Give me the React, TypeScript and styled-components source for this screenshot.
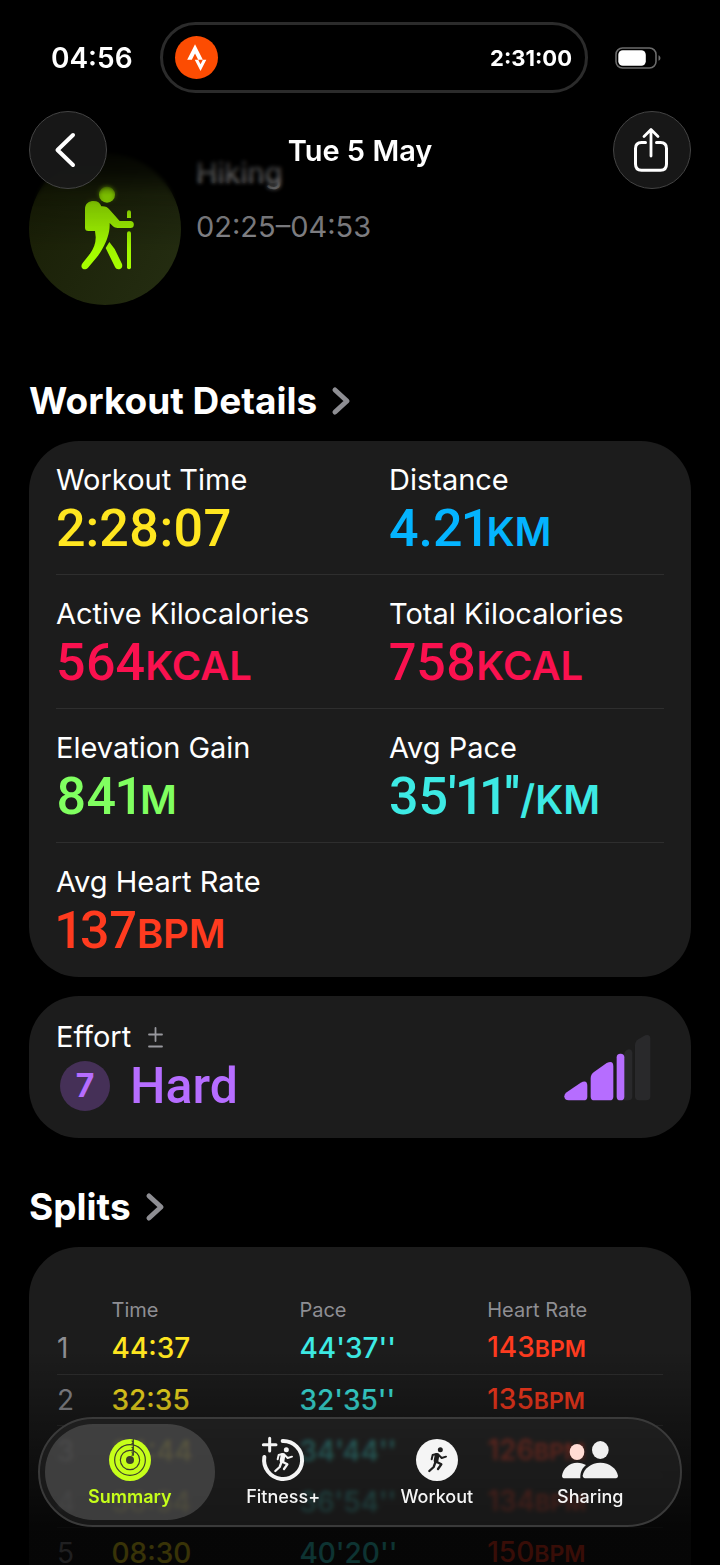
import React from 'react';
import styled, { createGlobalStyle } from 'styled-components';

const GlobalStyle = createGlobalStyle`
  *, *::before, *::after { box-sizing: border-box; }
  body {
    margin: 0;
    background: #000;
    color: #fff;
    font-family: Inter, "Liberation Sans", sans-serif;
  }
  button { font: inherit; color: inherit; background: none; border: 0; padding: 0; }
  a { color: inherit; text-decoration: none; }
  h1, h2, p, dl, dd { margin: 0; }
  svg { overflow: visible; }
`;

const Screen = styled.div`
  position: relative;
  height: 100vh;
  overflow: hidden;
  background: #000;
`;

const Scroller = styled.main`
  height: 100%;
  overflow-y: auto;
  scrollbar-width: none;
  padding: 153px 29px 140px;
`;

/* ---------- top overlay ---------- */

const TopOverlay = styled.header`
  position: absolute;
  inset: 0 0 auto;
  z-index: 2;
`;

const TopFade = styled.div`
  position: absolute;
  inset: 0 0 auto;
  height: 250px;
  background: linear-gradient(to bottom, #000 55%, rgba(0, 0, 0, 0.68) 69%, rgba(0, 0, 0, 0.25) 78%, transparent);
`;

const TopBlur = styled.div`
  position: absolute;
  inset: 0 0 auto;
  height: 206px;
  backdrop-filter: blur(2px);
  mask-image: linear-gradient(to bottom, #000 88%, transparent);
`;

const StatusBar = styled.div`
  position: relative;
  display: grid;
  grid-template-columns: 160px 1fr 132px;
  align-items: center;
  padding-top: 22px;
`;

const Clock = styled.time`
  padding-left: 51px;
  font-size: 28px;
  line-height: 36px;
  font-weight: 600;
`;

const Island = styled.div`
  display: flex;
  align-items: center;
  justify-content: space-between;
  height: 71px;
  padding: 0 13px 0 12px;
  border: 3px solid #2b2b2b;
  border-radius: 36px;
  font-size: 22px;
  line-height: 32px;
  font-weight: 700;
`;

const BatteryWrap = styled.div`
  display: flex;
  padding-left: 27px;
`;

const NavBar = styled.nav`
  position: relative;
  display: grid;
  grid-template-columns: 78px 1fr 78px;
  align-items: center;
  padding: 18px 29px 0;
`;

const RoundButton = styled.button`
  display: flex;
  align-items: center;
  justify-content: center;
  width: 78px;
  height: 78px;
  border-radius: 50%;
  border: 1px solid #444;
  background: rgba(26, 26, 26, 0.9);
`;

const NavTitle = styled.h1`
  padding-top: 2px;
  text-align: center;
  font-size: 29px;
  line-height: 40px;
  font-weight: 600;
`;

/* ---------- workout summary ---------- */

const Intro = styled.section`
  display: flex;
  gap: 15px;
  height: 152px;
`;

const Badge = styled.div`
  display: flex;
  justify-content: center;
  padding-top: 32px;
  width: 152px;
  height: 152px;
  border-radius: 50%;
  background: linear-gradient(120deg, #181d05, #252e12);
`;

const IntroText = styled.div`
  display: flex;
  flex-direction: column;
  gap: 14px;
  font-size: 29px;
  line-height: 40px;
`;

const IntroName = styled.p`
  font-weight: 400;
`;

const IntroTime = styled.p`
  color: #88888c;
`;

const SectionLink = styled.a`
  display: flex;
  align-items: center;
  gap: 15px;
`;

const SectionTitle = styled.h2<{ $top: number }>`
  margin-top: ${(p) => p.$top}px;
  margin-bottom: 16px;
  font-size: 37px;
  line-height: 48px;
  font-weight: 700;
`;

const Card = styled.section`
  border-radius: 50px;
  background: #1c1c1c;
`;

const MetricsCard = styled(Card)`
  padding: 0 27px;
`;

const MetricRow = styled.dl`
  display: grid;
  grid-template-columns: 1fr 1fr;
  column-gap: 58px;
  padding: 21px 0 14px;
  border-bottom: 1px solid #2e2e2e;
  &:last-child { border-bottom-color: transparent; }
`;

const Label = styled.dt`
  font-size: 29px;
  line-height: 36px;
  white-space: nowrap;
`;

const Value = styled.dd<{ $color: string }>`
  color: ${(p) => p.$color};
  font-family: Roboto, Inter, sans-serif;
  font-size: 52px;
  line-height: 62px;
  font-weight: 500;
  font-variant-numeric: proportional-nums;
  white-space: nowrap;
`;

const Unit = styled.span`
  font-family: Inter, sans-serif;
  font-size: 40px;
  line-height: 1;
  font-weight: 600;
`;

const EffortCard = styled(Card)`
  display: flex;
  align-items: flex-start;
  justify-content: space-between;
  margin-top: 19px;
  padding: 23px 41px 21px 27px;
`;

const EffortLabel = styled.div`
  display: flex;
  align-items: center;
  gap: 17px;
  font-size: 29px;
  line-height: 36px;
`;

const EffortValue = styled.div`
  display: flex;
  align-items: center;
  gap: 20px;
  height: 62px;
  padding-left: 4px;
  color: #b66dff;
  font-family: Roboto, Inter, sans-serif;
  font-size: 50px;
  line-height: 60px;
  font-weight: 500;
`;

const EffortScore = styled.span`
  display: flex;
  align-items: center;
  justify-content: center;
  width: 50px;
  height: 50px;
  border-radius: 50%;
  background: #453057;
  font-family: Inter, sans-serif;
  font-size: 32px;
  line-height: 40px;
  font-weight: 700;
`;

const EffortChart = styled.svg`
  margin-top: 15px;
`;

/* ---------- splits ---------- */

const SplitsCard = styled(Card)`
  padding: 42px 28px 40px;
`;

const SplitsTable = styled.table`
  width: 100%;
  table-layout: fixed;
  border-collapse: collapse;
  text-align: left;
`;

const HeadCell = styled.th<{ $width?: string }>`
  width: ${(p) => p.$width || 'auto'};
  padding: 8px 0 0;
  height: 34px;
  color: #8e8e93;
  font-size: 20px;
  line-height: 26px;
  font-weight: 400;
`;

const SplitRow = styled.tr`
  height: 51px;
  & + & { border-top: 1px solid #2e2e2e; }
`;

const SplitCell = styled.td<{ $color: string }>`
  padding: 0;
  color: ${(p) => p.$color};
  font-size: 28px;
  line-height: 40px;
  font-weight: 500;
  white-space: nowrap;
`;

const SplitIndex = styled.th`
  padding: 0;
  color: #8e8e93;
  font-size: 28px;
  line-height: 40px;
  font-weight: 400;
`;

const SplitUnit = styled.span`
  font-size: 23px;
  font-weight: 600;
`;

/* ---------- tab bar ---------- */

const BottomFade = styled.div`
  position: absolute;
  inset: auto 0 0;
  height: 215px;
  background: linear-gradient(to bottom, transparent, rgba(0, 0, 0, 0.2) 22%, rgba(0, 0, 0, 0.46) 50%, rgba(0, 0, 0, 0.78) 85%);
  pointer-events: none;
`;

const TabBar = styled.nav`
  position: absolute;
  inset: auto 38px 38px;
  display: grid;
  grid-template-columns: repeat(4, 1fr);
  height: 110px;
  padding: 0 13px;
  border: 2px solid #3a3a3a;
  border-radius: 55px;
  background: rgba(40, 40, 40, 0.5);
  backdrop-filter: blur(2px);
`;

const Tab = styled.a<{ $active?: boolean }>`
  position: relative;
  display: flex;
  flex-direction: column;
  align-items: center;
  gap: 4px;
  padding-top: 20px;
  color: ${(p) => (p.$active ? '#c6ff1a' : '#f5f5f5')};
  font-size: 18px;
  line-height: 24px;
  font-weight: ${(p) => (p.$active ? 600 : 500)};

  &::before {
    content: '';
    position: absolute;
    inset: 5px -8px;
    border-radius: 48px;
    background: ${(p) => (p.$active ? 'rgba(86, 86, 86, 0.62)' : 'transparent')};
  }
  & > * { position: relative; }
`;

/* ---------- drawings ---------- */

const Chevron = () => (
  <svg width="18" height="28" viewBox="0 0 18 28" fill="none" stroke="#8e8e93" strokeWidth="5" strokeLinecap="round" strokeLinejoin="round">
    <path d="M3 3l12 11L3 25" />
  </svg>
);

const Battery = () => (
  <svg width="47" height="22" viewBox="0 0 47 22" fill="none">
    <rect x="1" y="1" width="40" height="20" rx="6.5" stroke="#6b6b6b" strokeWidth="1.6" />
    <rect x="3.3" y="3.3" width="27.5" height="15.4" rx="4.5" fill="#fff" />
    <path d="M43.5 8.2c2.6 1 2.6 4.6 0 5.600z" fill="#6b6b6b" />
  </svg>
);

const StravaLogo = () => (
  <svg width="43" height="43" viewBox="0 0 43 43">
    <circle cx="21.500" cy="21.500" r="21.500" fill="#fc4c02" />
    <g transform="translate(8.300 8.200) scale(1.120)" fill="#fff">
      <path d="M15.387 17.944l-2.089-4.116h-3.065L15.387 24l5.150-10.172h-3.066m-7.008-5.599l2.836 5.598h4.172L10.463 0l-7 13.828h4.169" />
    </g>
  </svg>
);

const Hiker = () => (
  <svg width="55" height="87" viewBox="233 555 165 261">
    <defs>
      <linearGradient id="hiker" x1="0" y1="0" x2="0" y2="1">
        <stop offset="0" stopColor="#9df000" />
        <stop offset="1" stopColor="#a6ff00" />
      </linearGradient>
    </defs>
    <g fill="url(#hiker)">
      <circle cx="320" cy="584" r="24" />
      <path d="M254 628C254 610 266 603 280 603C292 603 299 608 303 619C313 618 322 621 328 629L358 663H390a10 10 0 0 1 0 21H352C346 684 342 682 338 679L328 669C329 700 319 722 307 745C301 756 296 764 290 771L263 803C257 809 249 809 245 804C242 799 243 794 247 789L270 760C280 746 287 728 286 710L284 693H265C257 693 254 689 254 683Z" />
      <path d="M327 726L343 747L365 792C367 799 365 805 359 807C353 809 347 807 344 801L316 744Z" />
      <rect x="380" y="694" width="12" height="114" rx="6" />
      <path d="M380 654V637a6 6 0 0 1 12 0V654Z" />
    </g>
  </svg>
);

const EffortBars = () => (
  <EffortChart width="88" height="68" viewBox="0 0 264 204" role="img" aria-label="Effort level 7 of 10">
    <g fill="#29292b">
      <path d="M186 64Q188 48 200 46Q211 46 211 58V186Q211 199 199 199H186Z" />
      <path d="M221 34Q221 22 232 15L252 4Q266 -1 267 14V187Q267 199 255 199H233Q221 199 221 187Z" transform="translate(-2 0)" />
    </g>
    <g fill="#b66dff">
      <path d="M20 199Q7 199 7 187Q7 180 14 175L56 146Q76 136 76 156V188Q76 199 65 199Z" />
      <path d="M86 133Q86 121 96 114L134 87Q154 77 154 97V188Q154 199 143 199H97Q86 199 86 188Z" />
      <rect x="164" y="59" width="23" height="140" rx="11" />
    </g>
  </EffortChart>
);

const Runner = ({ color }: { color: string }) => (
  <g stroke={color} fill="none" strokeLinecap="round" strokeLinejoin="round">
    <circle cx="73" cy="32" r="7.500" fill={color} stroke="none" />
    <path d="M63 49L60 66" strokeWidth="14" />
    <path d="M61 45L50 48L47 61" strokeWidth="6" />
    <path d="M67 47L77 57L90 53" strokeWidth="6" />
    <path d="M61 68L76 76L66 90" strokeWidth="7" />
    <path d="M58 70L53 84L40 96" strokeWidth="7" />
  </g>
);

const SummaryIcon = () => (
  <svg width="42" height="42" viewBox="0 0 126 126">
    <circle cx="63" cy="63" r="63" fill="#c6ff1a" />
    <g fill="none" stroke="#3b3f2c" strokeWidth="3.500">
      <circle cx="63" cy="63" r="46" />
      <circle cx="63" cy="63" r="29" />
      <path d="M73 0V50M68 5l5 5-5 5M68 24l5 5-5 5M68 40l5 5-5 5" />
    </g>
    <circle cx="63" cy="63" r="12" fill="#3b3f2c" />
  </svg>
);

const FitnessIcon = () => (
  <svg width="42" height="42" viewBox="0 0 126 126">
    <path d="M62 6A57 57 0 1 1 7 54" fill="none" stroke="#f5f5f5" strokeWidth="12" strokeLinecap="round" />
    <path d="M23 -2V36M4 17H42" stroke="#f5f5f5" strokeWidth="9" strokeLinecap="round" />
    <Runner color="#f5f5f5" />
  </svg>
);

const WorkoutIcon = () => (
  <svg width="42" height="42" viewBox="0 0 126 126">
    <circle cx="63" cy="63" r="63" fill="#f5f5f5" />
    <Runner color="#1e1e1e" />
  </svg>
);

const SharingIcon = () => (
  <svg width="58" height="42" viewBox="604 116 174 126" fill="#f0f0f0">
    <ellipse cx="652" cy="155" rx="22" ry="24" fill="#ffdcd4" />
    <ellipse cx="722" cy="149" rx="25" ry="27" />
    <path d="M607 226C610 205 628 187 653 187C664 187 672 190 679 194C668 203 661 215 662 234H616Q607 234 607 226Z" />
    <path d="M669 226C672 205 695 187 722 187C750 187 771 205 775 226Q775 234 765 234H680Q670 234 669 226Z" />
  </svg>
);

/* ---------- data ---------- */

type Metric = { label: string; value: string; unit?: string; color: string };

const metricRows: Metric[][] = [
  [
    { label: 'Workout Time', value: '2:28:07', color: '#ffe620' },
    { label: 'Distance', value: '4.21', unit: 'KM', color: '#04b4ff' },
  ],
  [
    { label: 'Active Kilocalories', value: '564', unit: 'KCAL', color: '#fa114f' },
    { label: 'Total Kilocalories', value: '758', unit: 'KCAL', color: '#fa114f' },
  ],
  [
    { label: 'Elevation Gain', value: '841', unit: 'M', color: '#80ff60' },
    { label: 'Avg Pace', value: "35'11''", unit: '/KM', color: '#3deae4' },
  ],
  [{ label: 'Avg Heart Rate', value: '137', unit: 'BPM', color: '#ff3b1f' }],
];

const splits = [
  { time: '44:37', pace: "44'37''", rate: '143' },
  { time: '32:35', pace: "32'35''", rate: '135' },
  { time: '34:44', pace: "34'44''", rate: '126' },
  { time: '36:54', pace: "36'54''", rate: '134' },
  { time: '08:30', pace: "40'20''", rate: '150' },
];

export default function App() {
  return (
    <Screen>
      <GlobalStyle />
      <Scroller>
        <Intro>
          <Badge><Hiker /></Badge>
          <IntroText>
            <IntroName>Hiking</IntroName>
            <IntroTime>02:25–04:53</IntroTime>
          </IntroText>
        </Intro>

        <SectionTitle $top={72}>
          <SectionLink href="#details">Workout Details <Chevron /></SectionLink>
        </SectionTitle>
        <MetricsCard>
          {metricRows.map((row) => (
            <MetricRow key={row[0].label}>
              {row.map((m) => (
                <div key={m.label}>
                  <Label>{m.label}</Label>
                  <Value $color={m.color}>{m.value}{m.unit && <Unit>{m.unit}</Unit>}</Value>
                </div>
              ))}
            </MetricRow>
          ))}
        </MetricsCard>

        <EffortCard>
          <div>
            <EffortLabel>
              Effort
              <svg width="15" height="21" viewBox="0 0 15 21" stroke="#98989d" strokeWidth="1.800" strokeLinecap="round">
                <path d="M7.500 1v13M1 7.500h13M1 19.500h13" />
              </svg>
            </EffortLabel>
            <EffortValue><EffortScore>7</EffortScore>Hard</EffortValue>
          </div>
          <EffortBars />
        </EffortCard>

        <SectionTitle $top={45}>
          <SectionLink href="#splits">Splits <Chevron /></SectionLink>
        </SectionTitle>
        <SplitsCard>
          <SplitsTable>
            <thead>
              <tr>
                <HeadCell $width="9%" aria-label="Split" />
                <HeadCell $width="31%">Time</HeadCell>
                <HeadCell $width="31%">Pace</HeadCell>
                <HeadCell>Heart Rate</HeadCell>
              </tr>
            </thead>
            <tbody>
              {splits.map((s, i) => (
                <SplitRow key={s.time}>
                  <SplitIndex scope="row">{i + 1}</SplitIndex>
                  <SplitCell $color="#ffe620">{s.time}</SplitCell>
                  <SplitCell $color="#3deae4">{s.pace}</SplitCell>
                  <SplitCell $color="#ff3b1f">{s.rate}<SplitUnit>BPM</SplitUnit></SplitCell>
                </SplitRow>
              ))}
            </tbody>
          </SplitsTable>
        </SplitsCard>
      </Scroller>

      <TopOverlay>
        <TopBlur />
        <TopFade />
        <StatusBar>
          <Clock>04:56</Clock>
          <Island><StravaLogo /><span>2:31:00</span></Island>
          <BatteryWrap><Battery /></BatteryWrap>
        </StatusBar>
        <NavBar>
          <RoundButton type="button" aria-label="Back">
            <svg width="22" height="36" viewBox="2 0 22 36" fill="none" stroke="#fff" strokeWidth="4" strokeLinecap="round" strokeLinejoin="round">
              <path d="M18 3L2.500 18L18 33" />
            </svg>
          </RoundButton>
          <NavTitle>Tue 5 May</NavTitle>
          <RoundButton type="button" aria-label="Share">
            <svg width="36" height="44" viewBox="1 0 36 44" fill="none" stroke="#fff" strokeWidth="3" strokeLinecap="round" strokeLinejoin="round">
              <path d="M12.500 14.500H8.500Q2.500 14.500 2.500 20.500V36Q2.500 42.300 8.500 42.300H27.500Q33.500 42.300 33.500 36V20.500Q33.500 14.500 27.500 14.500H23.500" />
              <path d="M18 28V2M11 8.500L18 1.500L25 8.500" strokeWidth="2.800" />
            </svg>
          </RoundButton>
        </NavBar>
      </TopOverlay>

      <BottomFade />
      <TabBar aria-label="Main">
        <Tab href="#summary" $active aria-current="page"><SummaryIcon /><span>Summary</span></Tab>
        <Tab href="#fitness"><FitnessIcon /><span>Fitness+</span></Tab>
        <Tab href="#workout"><WorkoutIcon /><span>Workout</span></Tab>
        <Tab href="#sharing"><SharingIcon /><span>Sharing</span></Tab>
      </TabBar>
    </Screen>
  );
}
